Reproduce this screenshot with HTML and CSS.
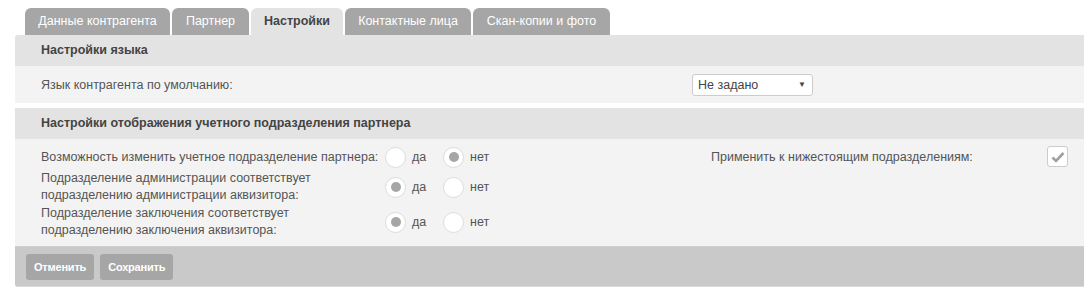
FILE: index.html
```html
<!DOCTYPE html>
<html lang="ru">
<head>
<meta charset="utf-8">
<title>Настройки</title>
<link rel="stylesheet" href="styles.css">
</head>
<body>
<div class="page">
  <nav class="tabs">
    <div class="tab t1">Данные контрагента</div>
    <div class="tab t2">Партнер</div>
    <div class="tab t3 active">Настройки</div>
    <div class="tab t4">Контактные лица</div>
    <div class="tab t5">Скан-копии и фото</div>
  </nav>
  <div class="panel">
    <section class="section">
      <div class="sec-head">Настройки языка</div>
      <div class="sec-body lang">
        <div class="lang-label">Язык контрагента по умолчанию:</div>
        <div class="select"><span>Не задано</span><span class="arrow">▼</span></div>
      </div>
    </section>
    <section class="section second">
      <div class="sec-head">Настройки отображения учетного подразделения партнера</div>
      <div class="sec-body opts">
        <div class="left">
          <div class="opt-row first">
            <div class="opt-label">Возможность изменить учетное подразделение партнера:</div>
            <div class="radios">
              <span class="radio"></span><span class="rtext">да</span>
              <span class="radio on"></span><span class="rtext">нет</span>
            </div>
          </div>
          <div class="opt-row two">
            <div class="opt-label">Подразделение администрации соответствует подразделению администрации аквизитора:</div>
            <div class="radios">
              <span class="radio on"></span><span class="rtext">да</span>
              <span class="radio"></span><span class="rtext">нет</span>
            </div>
          </div>
          <div class="opt-row two three">
            <div class="opt-label">Подразделение заключения соответствует подразделению заключения аквизитора:</div>
            <div class="radios">
              <span class="radio on"></span><span class="rtext">да</span>
              <span class="radio"></span><span class="rtext">нет</span>
            </div>
          </div>
        </div>
        <div class="right">
          <div class="apply-label">Применить к нижестоящим подразделениям:</div>
          <span class="check"><svg width="14" height="12" viewBox="0 0 14 12"><path d="M1.5 6.5 L5 10 L12.5 2" fill="none" stroke="#a0a0a0" stroke-width="2.6" stroke-linejoin="miter"/></svg></span>
        </div>
      </div>
    </section>
    <div class="footer">
      <button class="btn">Отменить</button>
      <button class="btn">Сохранить</button>
    </div>
  </div>
</div>
</body>
</html>
```
FILE: styles.css
```css
* { box-sizing: border-box; }
html, body { margin: 0; padding: 0; background: #fff; overflow: hidden; }
body {
  font-family: "Liberation Sans", Arial, sans-serif;
  font-size: 12.5px;
  color: #555;
}
.page { padding: 8px 0 0 15px; width: 1090px; }
.tabs { display: flex; gap: 2px; padding-left: 10px; height: 27px; }
.tab {
  background: #a6a6a6;
  color: #fff;
  height: 27px;
  line-height: 27px;
  text-align: center;
  border-radius: 6px 6px 0 0;
  white-space: nowrap;
}
.t1 { width: 145px; }
.t2 { width: 77px; }
.t3 { width: 92px; }
.t4 { width: 126px; }
.t5 { width: 137px; }
.tab.active { background: #e3e3e3; color: #444; font-weight: bold; }
.panel { width: 1090px; border-radius: 3px; overflow: hidden; }
.sec-head {
  background: #e3e3e3;
  height: 31px;
  line-height: 31px;
  padding-left: 26px;
  font-weight: bold;
  color: #444;
}
.sec-body { background: #f3f3f3; }
.section.second { margin-top: 5px; }
.lang { display: flex; align-items: center; height: 37px; padding-left: 26px; }
.lang-label { width: 651px; }
.select {
  width: 121px;
  height: 22px;
  background: #fff;
  border: 1px solid #ccc;
  border-radius: 3px;
  display: flex;
  align-items: center;
  justify-content: space-between;
  padding: 0 6px 0 5px;
  color: #444;
}
.arrow { font-size: 8px; color: #444; }
.opts { display: flex; padding: 8px 0 7px 26px; height: 107px; }
.left { width: 670px; }
.opt-row { display: flex; align-items: center; }
.opt-row.first { height: 20px; }
.opt-row.two { margin-top: 3px; line-height: 17px; }
.opt-row.three { margin-top: 1px; }
.opt-label { width: 344px; padding-right: 5px; }
.radios { display: flex; align-items: center; }
.radio {
  width: 21px;
  height: 21px;
  border-radius: 50%;
  background: #fff;
  border: 1px solid #dcdcdc;
  display: flex;
  align-items: center;
  justify-content: center;
}
.radio.on::after {
  content: "";
  width: 10px;
  height: 10px;
  border-radius: 50%;
  background: #a6a6a6;
}
.rtext { margin-left: 6px; width: 31px; }
.right { display: flex; align-items: flex-start; width: 357px; justify-content: space-between; }
.apply-label { line-height: 20px; }
.check {
  width: 21px;
  height: 21px;
  margin-top: -1px;
  background: #fff;
  border: 1px solid #ccc;
  border-radius: 3px;
  display: flex;
  align-items: center;
  justify-content: center;
}
.footer {
  background: #c9c9c9;
  border-top: 1px solid #d0d0d0;
  border-bottom: 1px solid #dadada;
  height: 41px;
  display: flex;
  align-items: center;
  gap: 6px;
  padding-left: 11px;
}
.btn {
  font-family: "Liberation Sans", Arial, sans-serif;
  font-size: 11px;
  font-weight: bold;
  color: #fff;
  background: #a6a6a6;
  border: none;
  border-radius: 3px;
  height: 26px;
  padding: 0 8px;
  letter-spacing: -0.2px;
}
```
